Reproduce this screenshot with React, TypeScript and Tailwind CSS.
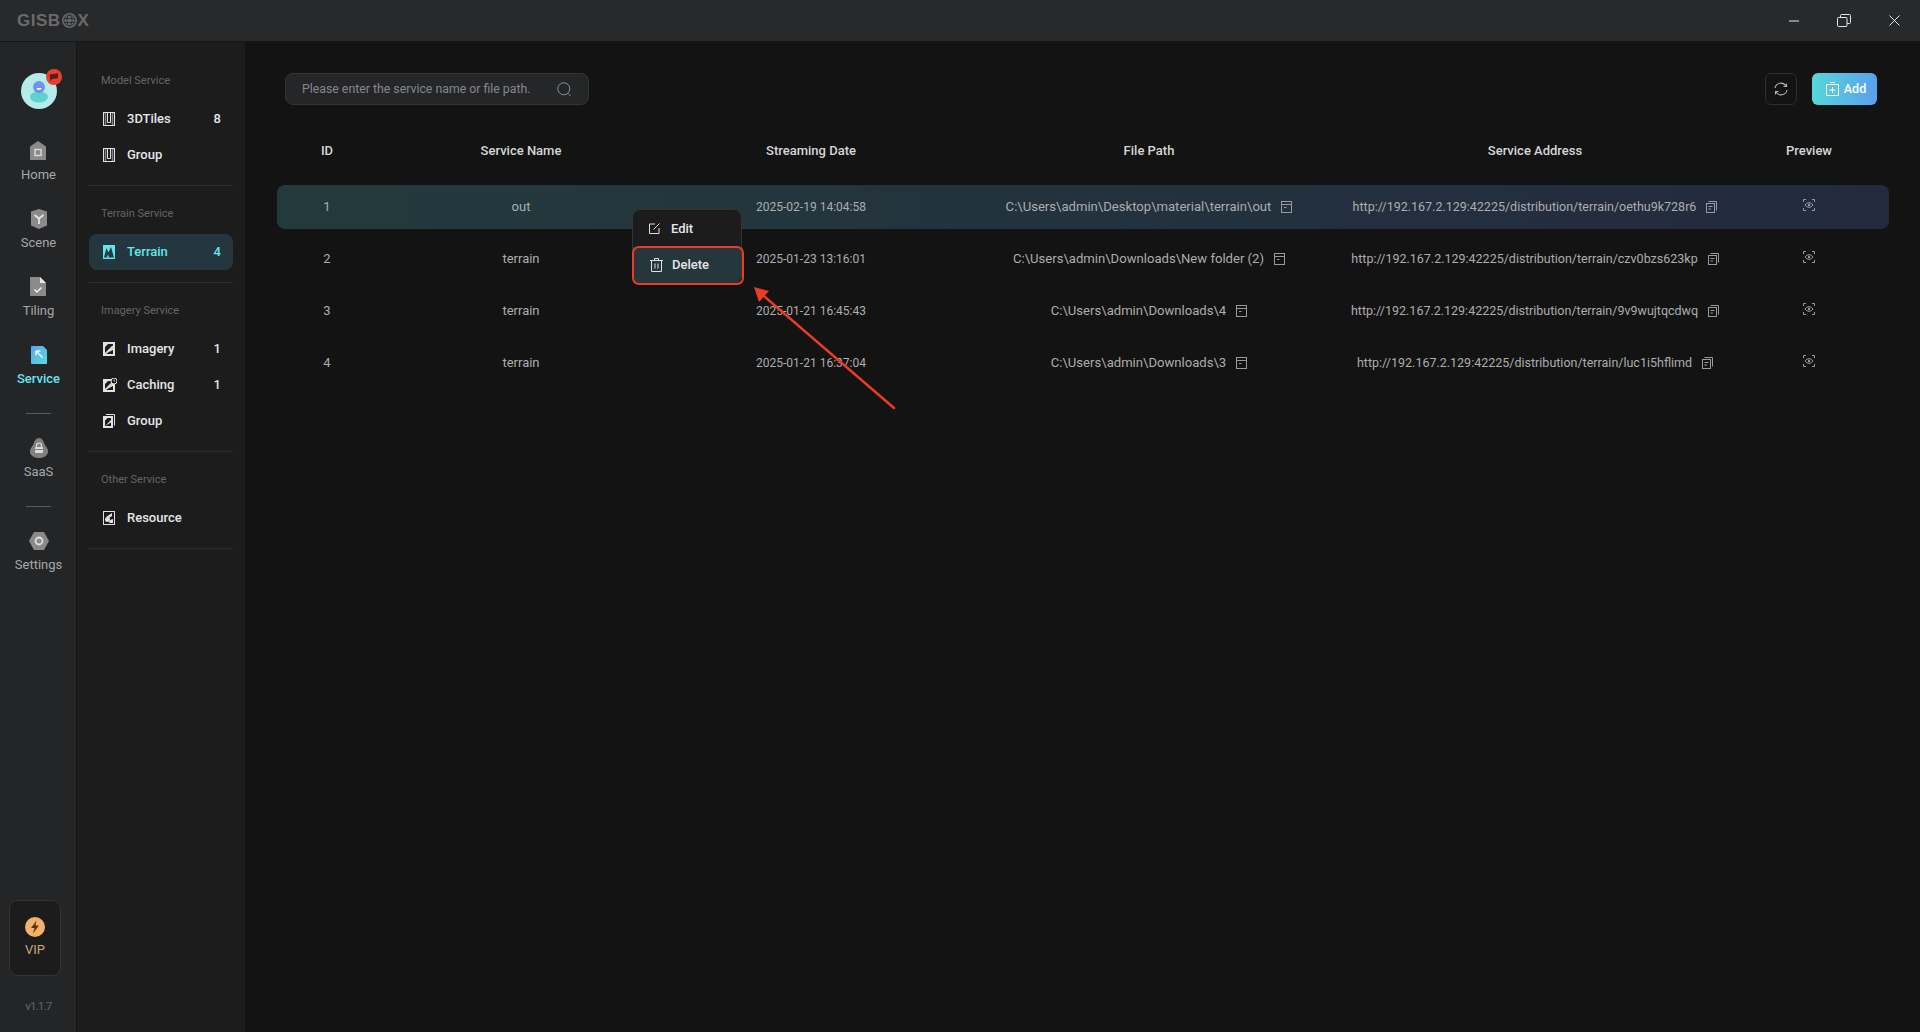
const font = "font-['Roboto',sans-serif]";

function Logo() {
  return (
    <div className="ml-[17px] flex items-center text-[17px] font-black leading-none tracking-[0.5px] text-[#6a6a6b] font-['Liberation_Sans',sans-serif]">
      <span>GISB</span>
      <svg width="15" height="15" viewBox="0 0 15 15" fill="none" className="mx-px">
        <circle cx="7.500" cy="7.500" r="7.500" fill="#6a6a6b" />
        <g stroke="#28292b" strokeWidth="0.900">
          <circle cx="7.500" cy="7.500" r="5.500" />
          <ellipse cx="7.500" cy="7.500" rx="2.500" ry="5.500" />
          <path d="M2 5.500h11M2 9.500h11" />
        </g>
      </svg>
      <span>X</span>
    </div>
  );
}

function WindowButtons() {
  return (
    <div className="ml-auto mr-[20px] flex items-center gap-[38px]">
      <svg width="10" height="2" viewBox="0 0 10 2">
        <path d="M0 1h10" stroke="#e5e5e5" strokeWidth="1" />
      </svg>
      <svg width="14" height="13" viewBox="0 0 14 13" fill="none" stroke="#e5e5e5" strokeWidth="1">
        <rect x="0.5" y="3.5" width="9.5" height="9" rx="1" />
        <path d="M3.5 3.5V1.5a1 1 0 0 1 1-1h8a1 1 0 0 1 1 1v7a1 1 0 0 1-1 1H10" />
      </svg>
      <svg width="11" height="11" viewBox="0 0 11 11" stroke="#e5e5e5" strokeWidth="1">
        <path d="M0.5 0.5l10 10M10.5 0.5l-10 10" />
      </svg>
    </div>
  );
}

function Avatar() {
  return (
    <div className="relative mt-[31px] h-9 w-9 rounded-full bg-[#b5ebe8]">
      <svg className="absolute inset-0" width="36" height="36" viewBox="0 0 36 36">
        <ellipse cx="18" cy="24" rx="9" ry="5.5" fill="#5ed2cc" />
        <circle cx="18" cy="14" r="6" fill="#6d94f0" />
        <path d="M15.5 15a2.5 2 0 0 0 5 0z" fill="#fff" />
      </svg>
      <div className="absolute right-[-5px] top-[-4px] flex h-4 w-4 items-center justify-center rounded-full bg-[#e8402f]">
        <svg width="10" height="9" viewBox="0 0 10 9">
          <path d="M0.5 1.5l8.5-1.2v5L3 6 1.5 8.500z" fill="#5a1c18" />
        </svg>
      </div>
    </div>
  );
}

const railIcons: Record<string, React.ReactNode> = {
  Home: (
    <svg width="16" height="20" viewBox="0 0 16 20">
      <path d="M8 0l8 5.500V19H0V5.500z" fill="#8a8a8b" />
      <rect x="5" y="8.500" width="6" height="6" fill="none" stroke="#dcdcdc" strokeWidth="1.4" />
    </svg>
  ),
  Scene: (
    <svg width="18" height="20" viewBox="0 0 18 20">
      <path d="M9 0l8 2.500v14L9 20l-8-3.500v-14z" fill="#8a8a8b" />
      <path d="M4.500 6L9 9.500 13.500 6M9 9.500V15" fill="none" stroke="#e4e4e4" strokeWidth="1.8" />
    </svg>
  ),
  Tiling: (
    <svg width="16" height="20" viewBox="0 0 16 20">
      <path d="M0 0h10l6 6v13H0z" fill="#8a8a8b" />
      <path d="M10 0l6 6h-6z" fill="#e8e8e8" />
      <path d="M4.500 12.500l2.500 2.500 4.500-4.500" fill="none" stroke="#f0f0f0" strokeWidth="1.5" />
    </svg>
  ),
  Service: (
    <svg width="16" height="18" viewBox="0 0 16 18">
      <defs>
        <linearGradient id="service-grad" x1="0" y1="0" x2="1" y2="1">
          <stop offset="0" stopColor="#5aa4f2" />
          <stop offset="1" stopColor="#58dcdc" />
        </linearGradient>
      </defs>
      <path d="M1 0h11l4 4v13a1 1 0 0 1-1 1H1a1 1 0 0 1-1-1V1a1 1 0 0 1 1-1z" fill="url(#service-grad)" />
      <path d="M5 5h4.500M5 5v4.500M5 5l6.500 6.500" fill="none" stroke="#f4f4f4" strokeWidth="1.5" />
    </svg>
  ),
  SaaS: (
    <svg width="18" height="20" viewBox="0 0 18 20">
      <path d="M9 0c3 0 4.500 3 5.500 6 1 2.500 3.500 4 3.500 7.500 0 4-4 6.500-9 6.500s-9-2.500-9-6.500C0 10 2.500 8.500 3.500 6 4.500 3 6 0 9 0z" fill="#808081" />
      <rect x="5" y="9" width="8" height="6" rx="1" fill="#dcdcdc" />
      <path d="M6.500 9V7.500a2.500 2.500 0 0 1 5 0V9" fill="none" stroke="#dcdcdc" strokeWidth="1.2" />
      <path d="M5 11.500h8" stroke="#808081" strokeWidth="1" />
    </svg>
  ),
  Settings: (
    <svg width="20" height="18" viewBox="0 0 20 18">
      <path d="M5 0h10l5 9-5 9H5L0 9z" fill="#8a8a8b" />
      <circle cx="10" cy="9" r="3.500" fill="none" stroke="#e0e0e0" strokeWidth="1.8" />
    </svg>
  ),
};

function RailItem({ label, active }: { label: string; active?: boolean }) {
  return (
    <div className="flex flex-col items-center gap-1">
      <div className="flex h-5 items-center justify-center">{railIcons[label]}</div>
      <span className={`text-[13px] leading-5 ${active ? "font-medium text-[#62e6ee]" : "text-[#a6a8aa]"}`}>{label}</span>
    </div>
  );
}

function Rail() {
  return (
    <aside className="box-content flex w-[75px] flex-col items-center border-r border-[#131314] bg-[#242527] pl-px">
      <Avatar />
      <div className="mt-8 flex flex-col items-center gap-6">
        <RailItem label="Home" />
        <RailItem label="Scene" />
        <RailItem label="Tiling" />
        <RailItem label="Service" active />
        <div className="h-px w-[25px] bg-[#5a5a5b]" />
        <RailItem label="SaaS" />
        <div className="h-px w-[25px] bg-[#5a5a5b]" />
        <RailItem label="Settings" />
      </div>
      <div className="mr-[7px] mt-auto flex h-[76px] w-[52px] flex-col items-center rounded-lg border border-[#36322e] bg-[#1c1c1d] pt-4">
        <svg width="20" height="20" viewBox="0 0 20 20">
          <circle cx="10" cy="10" r="10" fill="#f3b26c" />
          <path d="M11.500 3.500L6 11h3.500L8 16.500l6-8h-3.500z" fill="#5a3410" />
        </svg>
        <span className="mt-[3px] text-[13px] leading-5 text-[#c9a77f]">VIP</span>
      </div>
      <div className="mb-[16px] mt-[22px] text-[11px] leading-[18px] tracking-[-0.6px] text-[#5d6a7c]">v1.1.7</div>
    </aside>
  );
}

type NavIconName = "tiles" | "terrain" | "imagery" | "caching" | "group" | "resource";

function NavIcon({ name, color }: { name: NavIconName; color: string }) {
  if (name === "tiles") {
    return (
      <svg width="12" height="14" viewBox="0 0 12 14" fill="none">
        <rect x="0.500" y="0.500" width="11" height="13" stroke={color} />
        <path d="M2.500 1v12M9.500 1v12" stroke="#858585" strokeWidth="1.500" />
        <path d="M4.500 1v9.500h3V1" stroke={color} />
      </svg>
    );
  }
  if (name === "terrain") {
    return (
      <svg width="12" height="14" viewBox="0 0 12 14">
        <rect width="12" height="14" fill={color} />
        <path d="M1 12.500L3.500 3l2 4.500L8 2l3 10.500z" fill="#233a3f" />
        <path d="M3.500 12.500l1.500-3 1 3z" fill={color} />
      </svg>
    );
  }
  if (name === "imagery") {
    return (
      <svg width="12" height="14" viewBox="0 0 12 14">
        <rect width="12" height="14" fill={color} />
        <path d="M2 12l8-7V2H5L2 5zM2 12h8V8z" fill="#1c1c1d" />
        <path d="M2 12l8-8" stroke={color} strokeWidth="1.600" />
      </svg>
    );
  }
  if (name === "caching") {
    return (
      <svg width="14" height="14" viewBox="0 0 14 14">
        <rect y="1" width="12" height="13" fill={color} />
        <path d="M2 12l8-7V3H5L2 6zM2 12h8V8z" fill="#1c1c1d" />
        <path d="M2 12l8-8" stroke={color} strokeWidth="1.600" />
        <circle cx="11" cy="3" r="3" fill="#1c1c1d" stroke={color} />
        <path d="M11 1.500V3h1" stroke={color} strokeWidth="0.800" fill="none" />
      </svg>
    );
  }
  if (name === "group") {
    return (
      <svg width="12" height="14" viewBox="0 0 12 14" fill="none">
        <path d="M3 .500h8.500v11" stroke={color} />
        <rect y="2" width="10" height="12" fill={color} />
        <path d="M2 12l6-6V4H4.500L2 6.500zM2 12h6V8.500z" fill="#1c1c1d" />
      </svg>
    );
  }
  return (
    <svg width="12" height="14" viewBox="0 0 12 14" fill="none">
      <rect x="0.500" y="0.500" width="11" height="13" stroke={color} />
      <circle cx="4.500" cy="8.500" r="2.500" fill={color} />
      <path d="M3 6l6-4v3L6 7zM7 9l3-1v4H6z" fill={color} />
    </svg>
  );
}

function NavRow({ icon, label, count, active }: { icon: NavIconName; label: string; count?: string; active?: boolean }) {
  const color = active ? "#62e6ee" : "#e2e2e2";
  return (
    <div className={`flex h-9 items-center rounded-lg pl-[14px] pr-3 ${active ? "bg-[#24373e]" : ""}`}>
      <div className="flex w-6 shrink-0 items-center">
        <NavIcon name={icon} color={color} />
      </div>
      <span className={`text-[13px] font-medium ${active ? "text-[#62e6ee]" : "text-[#e4e6ea]"}`}>{label}</span>
      {count && <span className={`ml-auto text-[13px] font-medium ${active ? "text-[#62e6ee]" : "text-[#e4e6ea]"}`}>{count}</span>}
    </div>
  );
}

const sections: { title: string; items: { icon: NavIconName; label: string; count?: string; active?: boolean }[] }[] = [
  {
    title: "Model Service",
    items: [
      { icon: "tiles", label: "3DTiles", count: "8" },
      { icon: "tiles", label: "Group" },
    ],
  },
  { title: "Terrain Service", items: [{ icon: "terrain", label: "Terrain", count: "4", active: true }] },
  {
    title: "Imagery Service",
    items: [
      { icon: "imagery", label: "Imagery", count: "1" },
      { icon: "caching", label: "Caching", count: "1" },
      { icon: "group", label: "Group" },
    ],
  },
  { title: "Other Service", items: [{ icon: "resource", label: "Resource" }] },
];

function Sidebar() {
  return (
    <nav className="w-[168px] shrink-0 bg-[#1c1c1d] px-3 pt-[11px]">
      {sections.map((s) => (
        <div key={s.title} className="mt-[18px] border-b border-[#2f2f30] pb-3">
          <div className="mb-[10px] pl-3 text-[11px] leading-5 text-[#646566]">{s.title}</div>
          {s.items.map((it) => (
            <NavRow key={it.label + it.icon} {...it} />
          ))}
        </div>
      ))}
    </nav>
  );
}

function FileIcon() {
  return (
    <svg width="11" height="12" viewBox="0 0 11 12" fill="none" stroke="#9a9a9a" strokeWidth="1">
      <rect x="0.500" y="0.500" width="10" height="11" />
      <path d="M0.500 3.500h10M3 6.500h2.500" />
    </svg>
  );
}

function CopyIcon() {
  return (
    <svg width="11" height="12" viewBox="0 0 11 12" fill="none" stroke="#9a9a9a" strokeWidth="1">
      <rect x="0.500" y="2.500" width="8" height="9" />
      <path d="M2.500 .500h8v9M2.500 5.500h4M2.500 8h2.500" />
    </svg>
  );
}

function PreviewIcon() {
  return (
    <svg width="12" height="12" viewBox="0 0 12 12" fill="none" stroke="#9a9a9a" strokeWidth="1" className="mb-1">
      <path d="M.500 3V.500H3M9 .500h2.500V3M.500 9v2.500H3M9 11.500h2.500V9" />
      <path d="M2 6c1-1.500 2.500-2.300 4-2.300S9 4.500 10 6c-1 1.500-2.500 2.300-4 2.300S3 7.500 2 6z" />
      <circle cx="6" cy="6" r="1.200" fill="#9a9a9a" stroke="none" />
    </svg>
  );
}

const rows = [
  { id: 1, name: "out", date: "2025-02-19 14:04:58", path: "C:\\Users\\admin\\Desktop\\material\\terrain\\out", url: "http://192.167.2.129:42225/distribution/terrain/oethu9k728r6" },
  { id: 2, name: "terrain", date: "2025-01-23 13:16:01", path: "C:\\Users\\admin\\Downloads\\New folder (2)", url: "http://192.167.2.129:42225/distribution/terrain/czv0bzs623kp" },
  { id: 3, name: "terrain", date: "2025-01-21 16:45:43", path: "C:\\Users\\admin\\Downloads\\4", url: "http://192.167.2.129:42225/distribution/terrain/9v9wujtqcdwq" },
  { id: 4, name: "terrain", date: "2025-01-21 16:37:04", path: "C:\\Users\\admin\\Downloads\\3", url: "http://192.167.2.129:42225/distribution/terrain/luc1i5hflimd" },
];

const columns = "grid grid-cols-[100px_288px_292px_384px_388px_160px] items-center text-center";

function ContextMenu() {
  return (
    <div className="absolute left-[355px] top-6 z-10 w-[110px] rounded-lg border border-[#333435] bg-[#1c1c1d] text-[13px] font-medium text-[#e6e6e6]">
      <div className="flex h-[37px] items-center gap-[11px] pl-4">
        <svg width="11" height="11" viewBox="0 0 11 11" fill="none" stroke="#e0e0e0" strokeWidth="1">
          <path d="M6 1H.500v9.500H10V5M4.500 6.500L10.500.500" />
        </svg>
        Edit
      </div>
      <div className="flex h-9 items-center gap-[9px] rounded-b-lg bg-[#25363d] pl-[17px]">
        <svg width="13" height="14" viewBox="0 0 13 14" fill="none" stroke="#e0e0e0" strokeWidth="1">
          <path d="M0 2.500h13M4.500 2.500V.500h4v2M1.500 2.500v11h10v-11M5 5.500v5M8 5.500v5" />
        </svg>
        Delete
      </div>
    </div>
  );
}

function Annotation() {
  return (
    <>
      <div className="absolute left-[355px] top-[61px] z-20 h-[39px] w-[112px] rounded-[7px] border-2 border-[#ea3c23]" />
      <svg className="absolute left-[470px] top-[95px] z-20" width="150" height="135" viewBox="0 0 150 135" fill="none">
        <path d="M147 128L10 10" stroke="#ea3c23" strokeWidth="2.500" strokeLinecap="round" />
        <path d="M7 7l5 15 10-11z" fill="#ea3c23" />
      </svg>
    </>
  );
}

function Main() {
  return (
    <main className="min-w-0 flex-1 bg-[#131314] pl-8 pr-[31px] pt-[31px]">
      <div className="flex items-center justify-between pl-2 pr-3">
        <div className="flex h-8 w-[304px] items-center justify-between rounded-lg border border-[#333435] bg-[#252628] pl-4 pr-[16px]">
          <span className="text-[12.300px] text-[#85878a]">Please enter the service name or file path.</span>
          <svg width="15" height="15" viewBox="0 0 15 15" fill="none" stroke="#8e8e8e" strokeWidth="1">
            <circle cx="6.800" cy="6.800" r="6" />
            <path d="M11 11.500l2.500 2.500" />
          </svg>
        </div>
        <div className="flex items-center gap-[15px]">
          <div className="flex h-8 w-8 items-center justify-center rounded-md border border-[#2d2e2f]">
            <svg width="14" height="14" viewBox="0 0 14 14" fill="none" stroke="#b4b4b4" strokeWidth="1.100">
              <path d="M1 6a6 6 0 0 1 11-2M13 8a6 6 0 0 1-11 2" />
              <path d="M12.500 1.500V4.500H9.500M1.500 12.500V9.500H4.500" />
            </svg>
          </div>
          <div className="flex h-8 w-[65px] items-center justify-center gap-[5px] rounded-md bg-gradient-to-r from-[#55d7d8] to-[#5a9fee] pl-[3px] text-[12.5px] font-medium text-white">
            <svg width="13" height="14" viewBox="0 0 13 14" fill="none" stroke="#fff" strokeWidth="1">
              <path d="M.500 2.500h12v11H.500zM4 .500h5M6.500 5v6M3.500 8h6" />
            </svg>
            Add
          </div>
        </div>
      </div>

      <div className={`${columns} mt-6 h-11 text-[13px] font-medium text-[#d6d6d6]`}>
        <div>ID</div>
        <div>Service Name</div>
        <div>Streaming Date</div>
        <div>File Path</div>
        <div>Service Address</div>
        <div>Preview</div>
      </div>

      <div className="relative mt-3 flex flex-col gap-2 text-[13px] text-[#adadad]">
        {rows.map((r) => (
          <div key={r.id} className={`${columns} h-11 rounded-lg ${r.id === 1 ? "bg-gradient-to-r from-[#233a3c] to-[#232a3f]" : ""}`}>
            <div>{r.id}</div>
            <div>{r.name}</div>
            <div className="text-[12px]">{r.date}</div>
            <div className="flex items-center justify-center gap-[10px] text-[13.100px]">
              {r.path}
              <FileIcon />
            </div>
            <div className="flex items-center justify-center gap-[10px] text-[12.500px]">
              {r.url}
              <CopyIcon />
            </div>
            <div className="flex justify-center">
              <PreviewIcon />
            </div>
          </div>
        ))}
        <ContextMenu />
        <Annotation />
      </div>
    </main>
  );
}

export default function App() {
  return (
    <div className={`flex h-screen w-full flex-col overflow-hidden ${font}`}>
      <header className="flex h-[42px] shrink-0 items-center border-b border-[#161617] bg-[#28292b]">
        <Logo />
        <WindowButtons />
      </header>
      <div className="flex min-h-0 flex-1">
        <Rail />
        <Sidebar />
        <Main />
      </div>
    </div>
  );
}
